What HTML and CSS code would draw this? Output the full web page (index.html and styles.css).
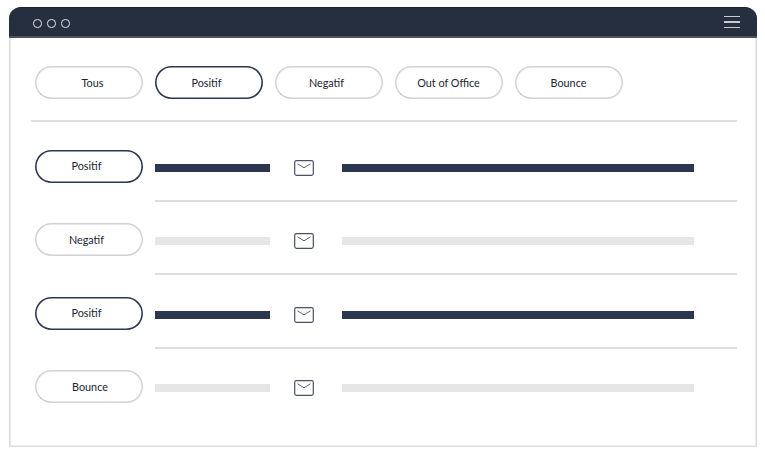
FILE: index.html
```html
<!DOCTYPE html>
<html lang="fr">
<head>
<meta charset="utf-8">
<title>Boîte de réponses</title>
<link rel="stylesheet" href="styles.css">
</head>
<body>
<svg class="sprite" width="0" height="0" aria-hidden="true">
  <symbol id="mail" viewBox="0 0 20 16">
    <rect x="0.7" y="0.7" width="18.6" height="14.6" rx="1.8" fill="none" stroke="currentColor" stroke-width="1.2"/>
    <path d="M3.5 3.8 10 7.8 16.5 3.8" fill="none" stroke="currentColor" stroke-width="0.9"/>
  </symbol>
</svg>
<div class="window">
  <header class="titlebar">
    <div class="dots"><span class="dot"></span><span class="dot"></span><span class="dot"></span></div>
    <div class="burger"><span></span><span></span><span></span></div>
  </header>
  <main class="content">
    <nav class="filters">
      <a class="pill nudge-r">Tous</a>
      <a class="pill active nudge-l">Positif</a>
      <a class="pill nudge-l">Negatif</a>
      <a class="pill">Out of Office</a>
      <a class="pill">Bounce</a>
    </nav>
    <section class="rows">
      <article class="row">
        <a class="pill active nudge-l">Positif</a>
        <div class="cells">
          <span class="bar short dark"></span>
          <svg class="icon"><use href="#mail"/></svg>
          <span class="bar long dark"></span>
        </div>
      </article>
      <article class="row">
        <a class="pill nudge-l">Negatif</a>
        <div class="cells">
          <span class="bar short"></span>
          <svg class="icon"><use href="#mail"/></svg>
          <span class="bar long"></span>
        </div>
      </article>
      <article class="row">
        <a class="pill active nudge-l">Positif</a>
        <div class="cells">
          <span class="bar short dark"></span>
          <svg class="icon"><use href="#mail"/></svg>
          <span class="bar long dark"></span>
        </div>
      </article>
      <article class="row last">
        <a class="pill nudge-s">Bounce</a>
        <div class="cells">
          <span class="bar short"></span>
          <svg class="icon"><use href="#mail"/></svg>
          <span class="bar long"></span>
        </div>
      </article>
    </section>
  </main>
</div>
</body>
</html>
```
FILE: styles.css
```css
* { box-sizing: border-box; }
html, body { margin: 0; background: #fff; }
body { padding: 7px 8px 0 9px; font-family: Lato, "Liberation Sans", sans-serif; }
.sprite { position: absolute; }

.window {
  width: 748px;
  height: 440px;
  border: 2px solid #dcdcdc;
  border-width: 0 1px 1px 1px;
  box-shadow: inset 1px 0 0 #e8e8e8, inset -1px 0 0 #e8e8e8, inset 0 -1px 0 #efefef;
  border-radius: 12px 12px 0 0;
  display: flex;
  flex-direction: column;
}
.titlebar {
  height: 31px;
  margin: 0 -1px;
  background: #252f40;
  border-top: 1px solid #1c2433;
  border-bottom: 2px solid #4b5361;
  border-radius: 12px 12px 0 0;
  padding: 3px 16px 0 24px;
  display: flex;
  align-items: center;
  justify-content: space-between;
  flex: none;
}
.dots { display: flex; gap: 5.5px; }
.dot { width: 8.5px; height: 8.5px; border: 1.3px solid #e4e6ea; border-radius: 50%; }
.burger { display: flex; flex-direction: column; gap: 4px; margin: -3px 1px 0 0; }
.burger span { width: 16px; height: 1.5px; background: #c8cbd0; }

.content { padding: 28px 19px 0 20.5px; }
.pill {
  flex: none;
  width: 108px;
  height: 33px;
  border-radius: 17px;
  box-shadow: inset 0 0 0 1.5px #d2d2d2;
  display: flex;
  align-items: center;
  justify-content: center;
  padding-bottom: 1px;
  font-size: 10.8px;
  color: #1a2433;
  background: #fff;
}
.pill.active { box-shadow: inset 0 0 0 1.6px #2b3650; }
.nudge-l { padding-right: 4px; }
.nudge-r { padding-left: 8px; }
.nudge-s { padding-left: 3px; }

.filters {
  display: flex;
  gap: 12px;
  padding-bottom: 21px;
  margin-left: 4px;
}
.rows { border-top: 2px solid #e0e0e0; padding-top: 27.5px; }
.row {
  display: flex;
  gap: 12px;
  height: 73.5px;
  align-items: flex-start;
  padding-left: 4px;
}
.cells {
  flex: 1;
  height: 52px;
  border-bottom: 2px solid #dedede;
  display: flex;
  align-items: flex-start;
  padding-top: 10px;
}
.row.last .cells { border-bottom: 0; }
.bar { display: block; height: 8px; margin-top: 4px; background: #e6e6e6; }
.bar.dark { background: #2b3650; }
.bar.short { width: 115px; }
.bar.long { width: 352px; }
.icon { width: 20px; height: 16px; margin: 0 28px 0 24px; color: #4a5160; flex: none; }
```
